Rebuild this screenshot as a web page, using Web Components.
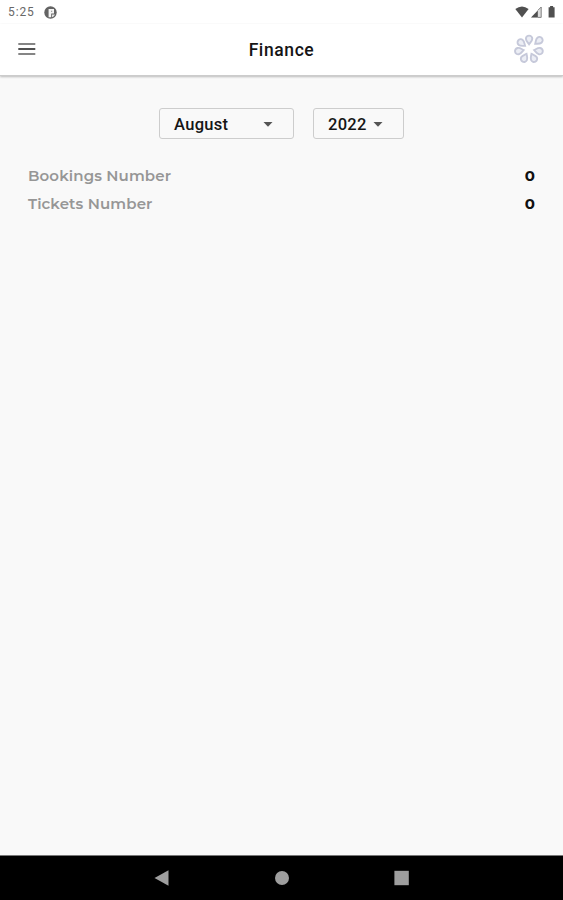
<!DOCTYPE html>
<html lang="en">
<head>
<meta charset="utf-8">
<title>Finance</title>
<style>
  html, body {
    margin: 0;
    height: 100%;
    overflow: hidden;
  }
</style>
</head>
<body>
<finance-app></finance-app>

<script>
class BaseElement extends HTMLElement{
  constructor(){
    super();
    this.attachShadow({mode:'open'});
  }

  connectedCallback(){
    const template = document.createElement('template');
    template.innerHTML = `${this.getStyles()}${this.getTemplate()}`;
    this.shadowRoot.replaceChildren(template.content.cloneNode(true));
  }
}

class StatusBar extends BaseElement{
  getTemplate(){
    return `
    <span>5:25</span>
    <svg class="app" width="13" height="13" viewBox="0 0 13 13">
      <circle cx="6.5" cy="6.5" r="6.2" fill="#636363"/>
      <path d="M4.6 3H10V7.4H7.2V11.2H4.6Z" fill="#f4f4f4"/>
      <path d="M7 4.7H8.2V5.7H7Z" fill="#8a8a8a"/>
      <path d="M8 8.4H11A5 5 0 0 1 8 11.2Z" fill="#e4e4e4"/>
    </svg>
    <svg class="signals" width="43" height="14" viewBox="0 0 43 14">
      <path d="M.3 4Q7 -1 13.6 4L7 12.4Z" fill="#505050"/>
      <path d="M16 12.4L26.3 1.8V12.4Z" fill="#ddd"/>
      <path d="M16 12.4L22.8 5.4V12.4Z" fill="#505050"/>
      <path d="M22.8 5.4L26.2 2V12.4H22.8" fill="none" stroke="#777" stroke-width=".9"/>
      <path d="M33.6 2.3H35.1V1H38.1V2.3H39.6V12.5H33.6Z" fill="#505050"/>
    </svg>
    `;
  }

  getStyles(){
    return `
    <style>
      :host {
        display: flex;
        align-items: center;
        height: 24px;
        padding: 0 5px 0 8px;
        box-sizing: border-box;
        color: #686868;
        font-size: 12px;
        letter-spacing: .9px;
      }
      .app { margin-left: 9px; }
      .signals { margin-left: auto; }
    </style>
    `;
  }
}

class AppHeader extends BaseElement{
  // seven drops around the centre, each pointing inwards
  getPetals(){
    const drops = [[.1,-9.6],[10,-8.4],[10,2],[4.7,9.2],[-4.7,9.2],[-10.2,2],[-7.8,-6.2]];
    return drops.map(([x,y]) => {
      const angle = Math.atan2(y,x) * 180 / Math.PI + 90;
      return `<path transform="translate(${x} ${y}) rotate(${angle})" d="M0 4.9C-1.3 3.1-3.2 1.6-3.2-.6A3.2 3.2 0 0 1 3.2-.6C3.2 1.6 1.3 3.1 0 4.9Z"/>`;
    }).join('');
  }

  getTemplate(){
    return `
    <svg width="18" height="14" viewBox="0 0 18 14">
      <path d="M.3 2H17.3M.3 12H17.3" stroke="#858585" stroke-width="2"/>
      <path d="M.3 7H17.3" stroke="#505050" stroke-width="2"/>
    </svg>
    <h1><slot></slot></h1>
    <svg class="logo" width="32" height="32" viewBox="-16 -16 32 32" fill="#eceef5" stroke="#c6c9da" stroke-width="1.9">
      ${this.getPetals()}
    </svg>
    `;
  }

  getStyles(){
    return `
    <style>
      :host {
        display: grid;
        grid-template-columns: 32px 1fr 32px;
        align-items: center;
        height: 52px;
        padding: 0 18px 1px;
        box-sizing: border-box;
        background: #fff;
        border-bottom: 1px solid #ccc;
        box-shadow: 0 1px 2px #bbb;
      }
      h1 {
        margin: 0;
        padding-top: 2px;
        font-size: 17.5px;
        font-weight: 500;
        line-height: 24px;
        letter-spacing: .6px;
        text-align: center;
        color: #151515;
      }
    </style>
    `;
  }
}

class SelectBox extends BaseElement{
  getTemplate(){
    return `
    <slot></slot>
    <svg width="10" height="5" viewBox="0 0 10 5"><path d="M.5 0H9.5L5 4.8Z" fill="#555"/></svg>
    `;
  }

  getStyles(){
    return `
    <style>
      :host {
        display: flex;
        align-items: center;
        justify-content: space-between;
        height: 31px;
        box-sizing: border-box;
        padding: 1px 20px 0 14px;
        border: 1px solid #cdcdcd;
        border-radius: 3px;
        color: #151515;
        font-size: 16.5px;
        font-weight: 500;
        letter-spacing: .3px;
      }
    </style>
    `;
  }
}

class StatRow extends BaseElement{
  getTemplate(){
    return `
    <span><slot></slot></span>
    <b><slot name="value"></slot></b>
    `;
  }

  getStyles(){
    return `
    <style>
      :host {
        display: flex;
        justify-content: space-between;
        height: 28px;
        line-height: 28px;
        font-family: Montserrat, Inter, sans-serif;
        font-size: 15px;
        font-weight: 600;
      }
      span {
        color: #969696;
        letter-spacing: .12px;
      }
      b {
        color: #111;
        font-weight: 700;
      }
    </style>
    `;
  }
}

class NavBar extends BaseElement{
  getTemplate(){
    return `
    <svg width="16" height="16" viewBox="0 0 16 16"><path d="M.5 8L14.5 .3V15.7Z"/></svg>
    <svg width="16" height="16" viewBox="0 0 16 16"><circle cx="8" cy="8" r="7"/></svg>
    <svg width="16" height="16" viewBox="0 0 16 16"><path d="M.4 .8H14.8V15.2H.4Z"/></svg>
    `;
  }

  getStyles(){
    return `
    <style>
      :host {
        display: flex;
        align-items: center;
        justify-content: center;
        gap: 104px;
        height: 45px;
        box-sizing: border-box;
        border-top: 1px solid #777;
        background: #000;
        fill: #9e9e9e;
      }
    </style>
    `;
  }
}

class FinanceApp extends BaseElement{
  getTemplate(){
    return `
    <status-bar></status-bar>
    <app-header>Finance</app-header>
    <main>
      <div class="filters">
        <select-box class="month">August</select-box>
        <select-box class="year">2022</select-box>
      </div>
      <stat-row>Bookings Number<span slot="value">0</span></stat-row>
      <stat-row>Tickets Number<span slot="value">0</span></stat-row>
    </main>
    <nav-bar></nav-bar>
    `;
  }

  getStyles(){
    return `
    <style>
      :host {
        display: flex;
        flex-direction: column;
        height: 100vh;
        background: #fff;
        font-family: Roboto, sans-serif;
      }
      app-header { z-index: 1; }
      main {
        flex: 1;
        padding: 32px 28px 0;
        background: #f9f9f9;
      }
      .filters {
        display: flex;
        justify-content: center;
        gap: 19px;
        margin-bottom: 23px;
      }
      .month { width: 135px; }
      .year { width: 91px; }
    </style>
    `;
  }
}

customElements.define('status-bar', StatusBar);
customElements.define('app-header', AppHeader);
customElements.define('select-box', SelectBox);
customElements.define('stat-row', StatRow);
customElements.define('nav-bar', NavBar);
customElements.define('finance-app', FinanceApp);
</script>
</body>
</html>
